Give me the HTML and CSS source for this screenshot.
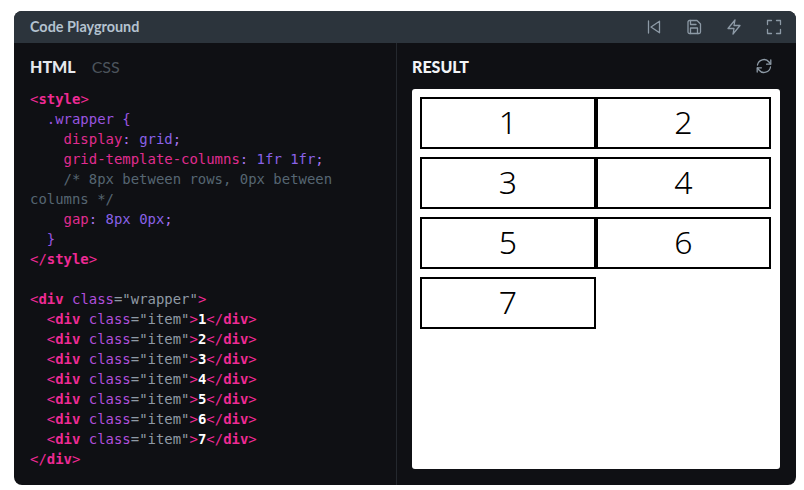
FILE: index.html
```html
<!DOCTYPE html>
<html lang="en">
<head>
<meta charset="utf-8">
<title>Code Playground</title>
<link rel="stylesheet" href="styles.css">
</head>
<body>
<main class="playground">
  <header class="topbar">
    <h1 class="title">Code Playground</h1>
    <div class="actions">
      <svg class="icon" viewBox="0 0 16 16"><path d="M2.500 2v12M13.500 2.200v11.600L5 8z"/></svg>
      <svg class="icon" viewBox="0 0 16 16"><path d="M3.500 1.500h7.500l3.500 3.500v8a1.500 1.500 0 0 1-1.500 1.500h-9.500a1.500 1.500 0 0 1-1.500-1.500v-10a1.500 1.500 0 0 1 1.500-1.500z"/><path d="M11.500 14.500v-5.500h-7v5.500M4.500 1.500v4h5.500"/></svg>
      <svg class="icon" viewBox="0 0 16 16"><path d="M9 1L2 9.500h6L7 15l7-8.500H8z"/></svg>
      <svg class="icon" viewBox="0 0 16 16"><path d="M5.500 1.500h-4v4M10.500 1.500h4v4M14.500 10.500v4h-4M5.500 14.500h-4v-4"/></svg>
    </div>
  </header>
  <div class="panes">
    <section class="editor">
      <div class="tabs"><span class="tab active">HTML</span><span class="tab">CSS</span></div>
<pre class="code"><span class="tag">&lt;<b>style</b>&gt;</span>
  <span class="sel">.wrapper {</span>
    <span class="prop">display</span><span class="pun">:</span> <span class="val">grid</span><span class="pun">;</span>
    <span class="prop">grid-template-columns</span><span class="pun">:</span> <span class="val">1fr 1fr</span><span class="pun">;</span>
    <span class="com">/* 8px between rows, 0px between
columns */</span>
    <span class="prop">gap</span><span class="pun">:</span> <span class="val">8px 0px</span><span class="pun">;</span>
  <span class="sel">}</span>
<span class="tag">&lt;/<b>style</b>&gt;</span>

<span class="tag">&lt;<b>div</b></span> <span class="attr">class</span><span class="str">="wrapper"</span><span class="tag">&gt;</span>
  <span class="tag">&lt;<b>div</b></span> <span class="attr">class</span><span class="str">="item"</span><span class="tag">&gt;</span><b class="txt">1</b><span class="tag">&lt;/<b>div</b>&gt;</span>
  <span class="tag">&lt;<b>div</b></span> <span class="attr">class</span><span class="str">="item"</span><span class="tag">&gt;</span><b class="txt">2</b><span class="tag">&lt;/<b>div</b>&gt;</span>
  <span class="tag">&lt;<b>div</b></span> <span class="attr">class</span><span class="str">="item"</span><span class="tag">&gt;</span><b class="txt">3</b><span class="tag">&lt;/<b>div</b>&gt;</span>
  <span class="tag">&lt;<b>div</b></span> <span class="attr">class</span><span class="str">="item"</span><span class="tag">&gt;</span><b class="txt">4</b><span class="tag">&lt;/<b>div</b>&gt;</span>
  <span class="tag">&lt;<b>div</b></span> <span class="attr">class</span><span class="str">="item"</span><span class="tag">&gt;</span><b class="txt">5</b><span class="tag">&lt;/<b>div</b>&gt;</span>
  <span class="tag">&lt;<b>div</b></span> <span class="attr">class</span><span class="str">="item"</span><span class="tag">&gt;</span><b class="txt">6</b><span class="tag">&lt;/<b>div</b>&gt;</span>
  <span class="tag">&lt;<b>div</b></span> <span class="attr">class</span><span class="str">="item"</span><span class="tag">&gt;</span><b class="txt">7</b><span class="tag">&lt;/<b>div</b>&gt;</span>
<span class="tag">&lt;/<b>div</b>&gt;</span></pre>
    </section>
    <section class="result">
      <div class="result-head">
        <h2 class="result-title">RESULT</h2>
        <svg class="icon refresh" viewBox="0 0 16 16"><path d="M1.500 7A6.500 6.500 0 0 1 13 4l1.500 2"/><path d="M14.800 2v4.200h-4.200"/><path d="M14.500 9A6.500 6.500 0 0 1 3 12l-1.500-2"/><path d="M1.200 14v-4.200h4.200"/></svg>
      </div>
      <div class="frame">
        <div class="wrapper">
          <div class="item">1</div>
          <div class="item">2</div>
          <div class="item">3</div>
          <div class="item">4</div>
          <div class="item">5</div>
          <div class="item">6</div>
          <div class="item">7</div>
        </div>
      </div>
    </section>
  </div>
</main>
</body>
</html>
```
FILE: styles.css
```css
* { box-sizing: border-box; }
html, body { height: 100%; }
body {
  margin: 0;
  padding: 11px 8px 5px 14px;
  background: #fff;
  font-family: Lato, "Noto Sans", sans-serif;
}
.playground {
  width: 782px;
  height: 474px;
  border-radius: 8px;
  overflow: hidden;
  background: #0f1014;
  display: flex;
  flex-direction: column;
}
.topbar {
  height: 32px;
  flex: none;
  background: #2c343c;
  display: flex;
  align-items: center;
  justify-content: space-between;
  padding: 0 14px 1px 16px;
}
.title {
  margin: 0;
  font-size: 14.400px;
  font-weight: 700;
  color: #b4c2cf;
}
.actions {
  display: flex;
  gap: 24px;
}
.icon {
  width: 16px;
  height: 16px;
  fill: none;
  stroke: #8d9aa6;
  stroke-width: 1.300;
  stroke-linecap: round;
  stroke-linejoin: round;
  display: block;
}
.panes {
  flex: 1;
  display: flex;
  min-height: 0;
}
.editor {
  width: 383px;
  flex: none;
  border-right: 1px solid #24282e;
  padding: 12px 0 0 16px;
}
.tabs {
  display: flex;
  gap: 16px;
  height: 22px;
  align-items: center;
}
.tab {
  font-size: 16px;
  font-weight: 400;
  color: #4c545c;
}
.tab.active {
  font-weight: 900;
  color: #e6e9ee;
}
.code {
  margin: 12px 0 0;
  font-family: "DejaVu Sans Mono", "Liberation Mono", monospace;
  font-size: 13.950px;
  line-height: 20px;
  color: #5f6b76;
  white-space: pre;
}
.code b { font-weight: 700; }
.tag { color: #ee2a94; }
.sel { color: #9a55e0; }
.prop { color: #e02c90; }
.val { color: #8a62e8; }
.pun { color: #a875ee; }
.com { color: #566672; }
.attr { color: #b14fdc; }
.str { color: #8f9aa5; }
.code .txt { color: #fff; }
.result {
  flex: 1;
  min-width: 0;
  padding: 12px 16px 16px 15px;
  display: flex;
  flex-direction: column;
}
.result-head {
  height: 22px;
  flex: none;
  display: flex;
  align-items: center;
  justify-content: space-between;
  padding-right: 8px;
  margin-bottom: 12px;
}
.result-title {
  margin: 0;
  font-size: 16px;
  font-weight: 900;
  color: #f2f4f7;
}
.frame {
  flex: 1;
  background: #fff;
  border-radius: 3px;
  padding: 8px 9px 8px 8px;
}
.wrapper {
  display: grid;
  grid-template-columns: 176px 175px;
  gap: 8px 0;
}
.item {
  height: 52px;
  border: 2px solid #000;
  padding-bottom: 3px;
  display: flex;
  align-items: center;
  justify-content: center;
  font-family: "Noto Sans", sans-serif;
  font-size: 32px;
  font-weight: 350;
  color: #000;
}
```
